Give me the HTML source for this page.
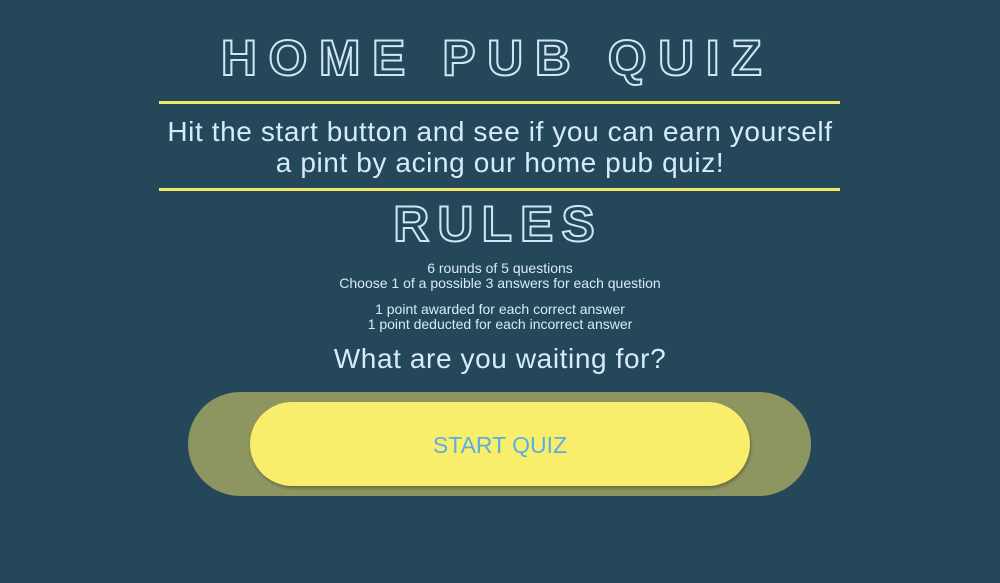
<!DOCTYPE html>
<html><head><style>
body{margin:0;width:1000px;height:583px;background:#25475a;font-family:"Liberation Sans",sans-serif;color:#d6ebf8;position:relative;overflow:hidden}
.t{position:absolute;left:0;width:1000px;text-align:center}
.big{font-weight:bold;color:transparent;-webkit-text-stroke:2px #cfe6f5}
.line{position:absolute;left:159px;width:681px;height:3px;background:#f2e56b}
</style></head><body>
<div class="t big" style="top:30px;left:-15px;font-size:50px;letter-spacing:11.5px;padding-left:12px;line-height:56px">HOME PUB QUIZ</div>
<div class="line" style="top:101px"></div>
<div class="t" style="top:116px;font-size:28px;letter-spacing:0.6px;line-height:31px">Hit the start button and see if you can earn yourself<br>a pint by acing our home pub quiz!</div>
<div class="line" style="top:188px"></div>
<div class="t big" style="top:196px;left:-10px;font-size:50px;letter-spacing:8px;padding-left:8px;line-height:56px">RULES</div>
<div class="t" style="top:261px;font-size:14px;line-height:15px">6 rounds of 5 questions<br>Choose 1 of a possible 3 answers for each question</div>
<div class="t" style="top:302px;font-size:14px;line-height:15px">1 point awarded for each correct answer<br>1 point deducted for each incorrect answer</div>
<div class="t" style="top:343px;font-size:28px;letter-spacing:0.6px;line-height:32px">What are you waiting for?</div>
<div style="position:absolute;left:188px;top:392px;width:623px;height:104px;border-radius:52px;background:#8d9660"></div>
<div style="position:absolute;left:250px;top:402px;width:500px;height:84px;border-radius:42px;background:#f9ee6b;box-shadow:1px 2px 3px rgba(0,0,0,.3);color:#5aaee0;font-size:23px;text-align:center;line-height:86px">START QUIZ</div>
</body></html>
